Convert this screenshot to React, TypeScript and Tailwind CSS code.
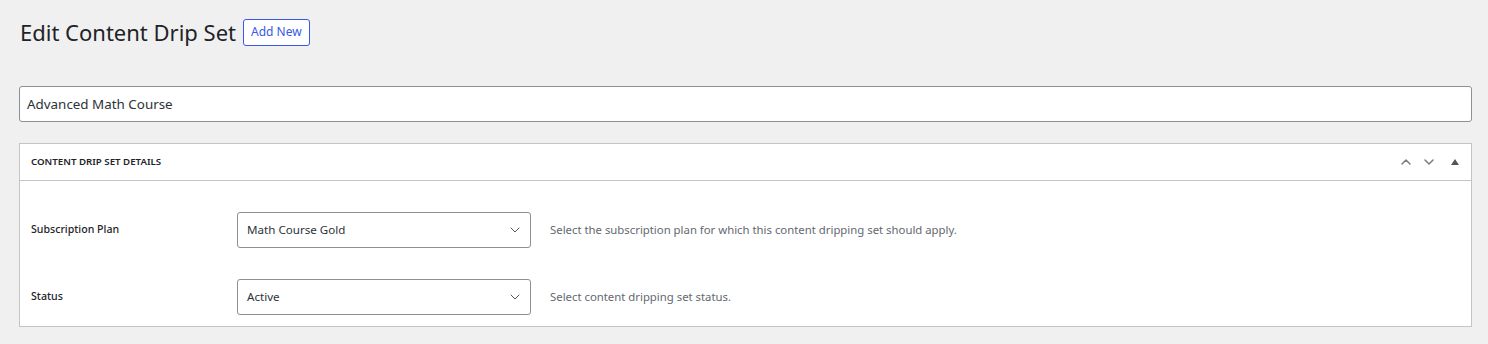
import { ChevronDown, ChevronUp } from "lucide-react";

const font = { fontFamily: '"Noto Sans", "Open Sans", sans-serif' };

function Row({ label, value, help }: { label: string; value: string; help: string }) {
  return (
    <div className="flex items-center h-9">
      <div className="w-[206px] text-[10.6px] font-medium text-[#1d2327]">{label}</div>
      <div className="w-[294px] h-9 border border-[#8c8f94] rounded-[3px] bg-white flex items-center justify-between pl-[9px] pr-[7px]">
        <span className="text-[11.6px] text-[#2c3338]">{value}</span>
        <ChevronDown className="w-4 h-4 text-[#50575e]" strokeWidth={1.5} />
      </div>
      <div className="ml-[19px] text-[11.35px] text-[#646970]">{help}</div>
    </div>
  );
}

export default function App() {
  return (
    <div className="w-[1488px] h-[344px] bg-[#f0f0f1] pl-[19px] pr-4 pt-[18px]" style={font}>
      <div className="flex items-center h-7">
        <h1 className="text-[22px] text-[#1d2327] ml-px">Edit Content Drip Set</h1>
        <button className="ml-[7px] h-[27px] px-[7px] border border-[#3858e9] rounded-[3px] bg-white text-[#3858e9] text-[12px]">
          Add New
        </button>
      </div>

      <div className="mt-10 h-9 border border-[#8c8f94] rounded-[3px] bg-white flex items-center pl-[7px] text-[13.4px] text-[#2c3338]">
        Advanced Math Course
      </div>

      <div className="mt-[21px] border border-[#c3c4c7] bg-white">
        <div className="h-[37px] border-b border-[#c3c4c7] flex items-center justify-between pl-[11px] pr-3">
          <span className="text-[9.7px] font-semibold uppercase text-[#1d2327]">Content Drip Set Details</span>
          <div className="flex items-center text-[#787c82]">
            <ChevronUp className="w-4 h-4" strokeWidth={2.25} />
            <ChevronDown className="w-4 h-4 ml-[7px]" strokeWidth={2.25} />
            <span className="ml-[14px] w-0 h-0 border-l-4 border-r-4 border-b-[6px] border-l-transparent border-r-transparent border-b-[#50575e]" />
          </div>
        </div>
        <div className="pl-[11px] pt-[31px] pb-[11px] flex flex-col gap-[31px]">
          <Row
            label="Subscription Plan"
            value="Math Course Gold"
            help="Select the subscription plan for which this content dripping set should apply."
          />
          <Row label="Status" value="Active" help="Select content dripping set status." />
        </div>
      </div>
    </div>
  );
}
